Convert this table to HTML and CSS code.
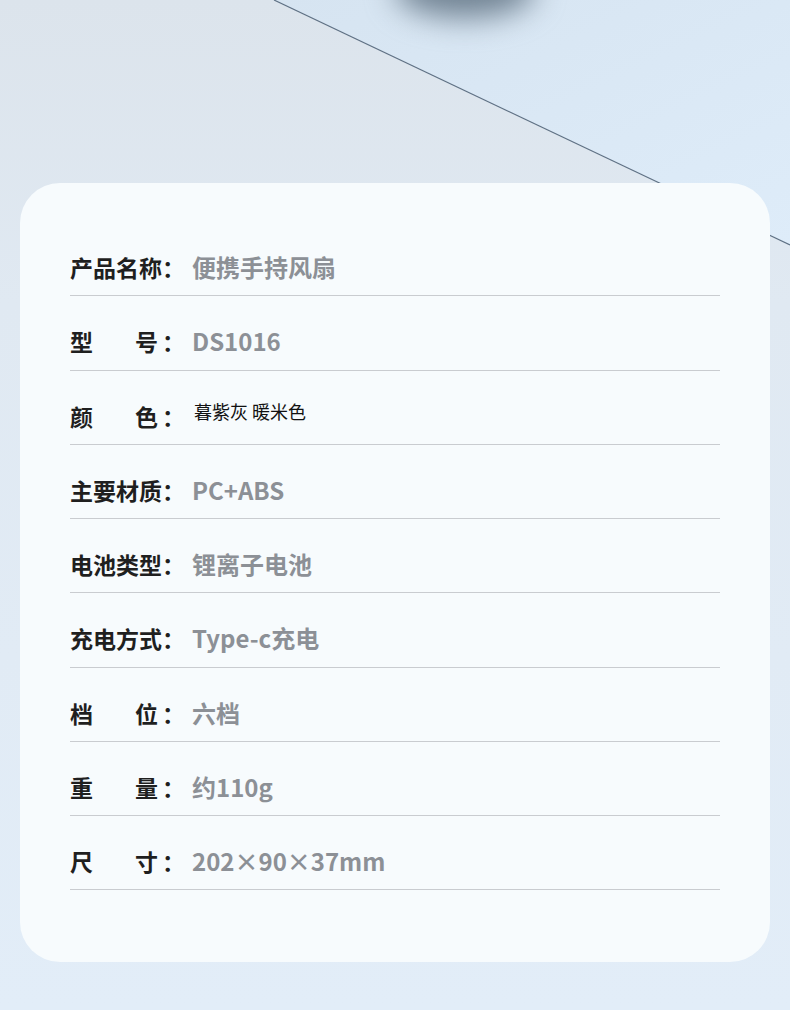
FILE: index.html
```html
<!DOCTYPE html>
<html lang="zh-CN">
<head>
<meta charset="utf-8">
<title>产品参数</title>
<link rel="stylesheet" href="styles.css">
</head>
<body>
<div class="backdrop" aria-hidden="true">
  <div class="blob"></div>
  <svg class="deco" width="790" height="1010" viewBox="0 0 790 1010">
    <defs>
      <linearGradient id="rightSide" x1="0" y1="0" x2="1" y2="1">
        <stop offset="0" stop-color="#d6e4f1"/>
        <stop offset="1" stop-color="#deecf9"/>
      </linearGradient>
    </defs>
    <polygon points="274,0 790,0 790,245" fill="url(#rightSide)"/>
    <line x1="274" y1="0" x2="790" y2="245" stroke="#5f7184" stroke-width="1.2"/>
  </svg>
</div>
<main class="card">
  <div class="row"><span class="label"><span class="name">产品名称</span>：</span><span class="value">便携手持风扇</span></div>
  <div class="row"><span class="label"><span class="name just">型号</span>：</span><span class="value">DS1016</span></div>
  <div class="row row-color"><span class="label"><span class="name just">颜色</span>：</span><span class="value plain">暮紫灰 暖米色</span></div>
  <div class="row"><span class="label"><span class="name">主要材质</span>：</span><span class="value">PC+ABS</span></div>
  <div class="row"><span class="label"><span class="name">电池类型</span>：</span><span class="value">锂离子电池</span></div>
  <div class="row"><span class="label"><span class="name">充电方式</span>：</span><span class="value">Type-c充电</span></div>
  <div class="row"><span class="label"><span class="name just">档位</span>：</span><span class="value">六档</span></div>
  <div class="row"><span class="label"><span class="name just">重量</span>：</span><span class="value">约110g</span></div>
  <div class="row"><span class="label"><span class="name just">尺寸</span>：</span><span class="value">202×90×37mm</span></div>
</main>
</body>
</html>
```
FILE: styles.css
```css
html, body {
  margin: 0;
  padding: 0;
}
body {
  width: 790px;
  min-height: 1010px;
  position: relative;
  overflow: hidden;
  background: linear-gradient(180deg, #dce4ec 0%, #e0e9f2 30%, #e2edf8 100%);
  font-family: "Noto Sans CJK SC", "Noto Sans", sans-serif;
  padding: 183px 20px 0;
  box-sizing: border-box;
}
.backdrop {
  position: absolute;
  left: 0;
  top: 0;
  width: 790px;
  height: 1010px;
  z-index: 0;
  pointer-events: none;
}
.deco {
  position: absolute;
  left: 0;
  top: 0;
}
.blob {
  position: absolute;
  left: 395px;
  top: -40px;
  width: 140px;
  height: 58px;
  border-radius: 50%;
  background: #718393;
  filter: blur(15px);
  z-index: 1;
}
.card {
  position: relative;
  z-index: 2;
  background: #f7fbfd;
  border-radius: 40px;
  padding: 39px 50px 73px;
  height: 779px;
  box-sizing: border-box;
}
.row {
  display: flex;
  align-items: flex-start;
  padding: 30px 0 13.25px;
  border-bottom: 1px solid #c9ccd0;
  line-height: 30px;
}
.label {
  display: flex;
  font-size: 23px;
  font-weight: 700;
  color: #1f1f1f;
  white-space: nowrap;
}
.name {
  display: inline-block;
  width: 92px;
}
.name.just {
  text-align: justify;
  text-align-last: justify;
  width: 88px;
  margin-right: 4px;
}
.value {
  margin-left: 7px;
  font-size: 24px;
  font-weight: 700;
  color: #8c9096;
  white-space: nowrap;
}
.value.plain {
  font-size: 18px;
  font-weight: 400;
  color: #111;
  line-height: 20px;
  margin-left: 9px;
  margin-top: 0;
}
```
